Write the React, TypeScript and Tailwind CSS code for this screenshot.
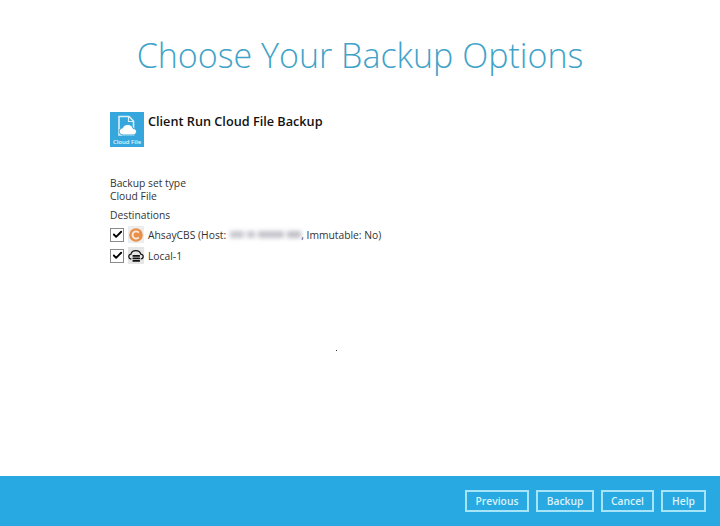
import { Check } from 'lucide-react';

function Tick() {
  return (
    <div className="flex h-[14px] w-[14px] items-center justify-center border border-[#8a8a8a] bg-white">
      <Check className="h-[11px] w-[11px] text-black" strokeWidth={4} />
    </div>
  );
}

function CloudFileIcon() {
  return (
    <div className="flex h-[35px] w-[34px] flex-col items-center bg-[#35a7dc]">
      <svg width="26" height="24" viewBox="0 0 26 24" className="mt-[3px]">
        <path d="M5 1.500h10l4.500 4.500v14H5z" fill="none" stroke="#d9f0fa" strokeWidth="1.600" />
        <path d="M14.500 1.500v5h5" fill="none" stroke="#d9f0fa" strokeWidth="1.200" />
        <path d="M9.500 20c-2.800 0-4.300-1.700-4.300-3.600 0-1.900 1.500-3.300 3.300-3.400C9.200 10.800 11.300 9.400 13.800 9.400c2.800 0 4.800 1.800 5.300 4.100 2 .1 3.400 1.500 3.400 3.200 0 1.900-1.500 3.300-3.500 3.300z" fill="#fff" stroke="#35a7dc" strokeWidth="1" />
      </svg>
      <span className="mt-[-1px] text-[6px] font-semibold leading-[8px] text-[#e4f5fc]">Cloud File</span>
    </div>
  );
}

function AhsayIcon() {
  return (
    <div className="flex h-[17px] w-[16px] items-center justify-center bg-[#ededed]">
      <svg width="16" height="16" viewBox="0 0 16 16">
        <circle cx="8" cy="8" r="6.800" fill="#e8904a" />
        <path d="M10.800 5.600A3.600 3.600 0 1 0 10.800 10.400" fill="none" stroke="#fbeadb" strokeWidth="1.900" />
      </svg>
    </div>
  );
}

function LocalIcon() {
  return (
    <div className="flex h-[17px] w-[16px] items-center justify-center bg-[#e6e6e6]">
      <svg width="16" height="16" viewBox="0 0 16 16">
        <path d="M3.500 11C1.800 11 .8 9.800.8 8.500c0-1.300 1-2.300 2.200-2.400C3.400 4 5.400 2.600 7.800 2.600c2.500 0 4.500 1.500 5 3.500 1.400.1 2.400 1.200 2.400 2.500 0 1.300-1 2.400-2.500 2.400" fill="none" stroke="#111" strokeWidth="1.200" />
        <rect x="4.500" y="7" width="7.500" height="1.800" rx=".6" fill="#111" />
        <rect x="4.500" y="9.500" width="7.500" height="1.800" rx=".6" fill="#111" />
        <rect x="4.500" y="12" width="7.500" height="1.800" rx=".6" fill="#111" />
      </svg>
    </div>
  );
}

function FooterButton({ label, width }: { label: string; width: string }) {
  return (
    <button className={`h-[22px] ${width} border-2 border-[#a6e4f7] text-[10.300px] font-semibold leading-none text-[#d8f3fc]`}>
      {label}
    </button>
  );
}

export default function App() {
  return (
    <div className="flex h-[526px] w-[720px] flex-col overflow-hidden bg-white font-['Open_Sans',sans-serif]">
      <main className="relative flex-1 pl-[110px]">
        {/* Page title */}
        <h1 className="ml-[-110px] mt-[33px] text-center text-[34px] font-light leading-[44px] text-[#3fa3c9]">
          Choose Your Backup Options
        </h1>

        {/* Backup set name */}
        <div className="mt-[35px] flex items-start gap-[4px]">
          <CloudFileIcon />
          <span className="mt-px text-[12.700px] font-semibold leading-[17px] text-[#111]">
            Client Run Cloud File Backup
          </span>
        </div>

        <div className="mt-[30px] text-[10.300px] leading-[13px] text-[#333]">
          <p>Backup set type</p>
          <p>Cloud File</p>
          <p className="mt-[6px]">Destinations</p>
        </div>

        <div className="mt-[4px] flex flex-col gap-[4px] text-[10.300px] leading-4 text-[#333]">
          <div className="flex items-center">
            <Tick />
            <div className="ml-[4px]"><AhsayIcon /></div>
            <span className="ml-[4px]">AhsayCBS (Host:</span>
            {/* Host name is blurred out in the screenshot */}
            <span className="ml-[4px] flex h-[7px] w-[71px] gap-[3px] blur-[2px]">
              <span className="w-[14px] bg-[#c8c8d0]" />
              <span className="w-[8px] bg-[#c8c8d0]" />
              <span className="w-[26px] bg-[#c4c4cc]" />
              <span className="w-[14px] bg-[#c0c0c8]" />
            </span>
            <span>, Immutable: No)</span>
          </div>
          <div className="flex items-center">
            <Tick />
            <div className="ml-[4px]"><LocalIcon /></div>
            <span className="ml-[4px]">Local-1</span>
          </div>
        </div>

        <div className="absolute left-[336px] top-[350px] h-px w-px bg-[#333]" />
      </main>

      <footer className="flex h-[50px] items-start justify-end gap-[7px] bg-[#29a9e1] pr-[14px] pt-[14px]">
        <FooterButton label="Previous" width="w-[64px]" />
        <FooterButton label="Backup" width="w-[58px]" />
        <FooterButton label="Cancel" width="w-[53px]" />
        <FooterButton label="Help" width="w-[45px]" />
      </footer>
    </div>
  );
}
